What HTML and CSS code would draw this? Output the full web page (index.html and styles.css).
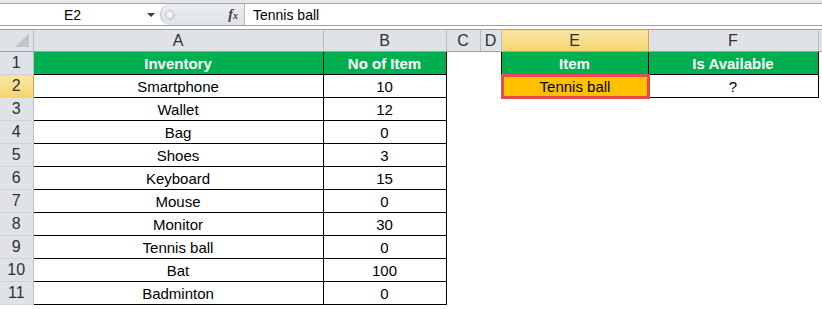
FILE: index.html
```html
<!DOCTYPE html>
<html lang="en">
<head>
    <meta charset="UTF-8">
    <title>Is Available - Excel</title>
    <link rel="stylesheet" href="styles.css">
</head>
<body>
    <div class="formula-bar">
        <div class="name-box">
            <span class="cell-ref">E2</span>
            <span class="drop"></span>
        </div>
        <div class="fx-zone">
            <span class="knob"></span>
            <span class="fx">f<small>x</small></span>
        </div>
        <div class="formula">Tennis ball</div>
    </div>

    <table class="sheet">
        <colgroup>
            <col class="w-row">
            <col class="w-a">
            <col class="w-b">
            <col class="w-c">
            <col class="w-d">
            <col class="w-e">
            <col class="w-f">
            <col class="w-g">
        </colgroup>
        <thead>
            <tr>
                <th class="corner"><span class="tri"></span></th>
                <th>A</th>
                <th>B</th>
                <th>C</th>
                <th>D</th>
                <th class="sel">E</th>
                <th>F</th>
                <th class="last"></th>
            </tr>
        </thead>
        <tbody>
            <tr>
                <th class="rh">1</th>
                <td class="hd">Inventory</td>
                <td class="hd">No of Item</td>
                <td></td>
                <td class="edge"></td>
                <td class="hd">Item</td>
                <td class="hd">Is Available</td>
                <td class="open"></td>
            </tr>
            <tr>
                <th class="rh sel">2</th>
                <td class="bx">Smartphone</td>
                <td class="bx">10</td>
                <td></td>
                <td class="edge"></td>
                <td class="bx active"><div class="pick">Tennis ball</div></td>
                <td class="bx">?</td>
                <td class="open"></td>
            </tr>
            <tr><th class="rh">3</th><td class="bx">Wallet</td><td class="bx">12</td><td></td><td></td><td></td><td></td><td class="open"></td></tr>
            <tr><th class="rh">4</th><td class="bx">Bag</td><td class="bx">0</td><td></td><td></td><td></td><td></td><td class="open"></td></tr>
            <tr><th class="rh">5</th><td class="bx">Shoes</td><td class="bx">3</td><td></td><td></td><td></td><td></td><td class="open"></td></tr>
            <tr><th class="rh">6</th><td class="bx">Keyboard</td><td class="bx">15</td><td></td><td></td><td></td><td></td><td class="open"></td></tr>
            <tr><th class="rh">7</th><td class="bx">Mouse</td><td class="bx">0</td><td></td><td></td><td></td><td></td><td class="open"></td></tr>
            <tr><th class="rh">8</th><td class="bx">Monitor</td><td class="bx">30</td><td></td><td></td><td></td><td></td><td class="open"></td></tr>
            <tr><th class="rh">9</th><td class="bx">Tennis ball</td><td class="bx">0</td><td></td><td></td><td></td><td></td><td class="open"></td></tr>
            <tr><th class="rh">10</th><td class="bx">Bat</td><td class="bx">100</td><td></td><td></td><td></td><td></td><td class="open"></td></tr>
            <tr><th class="rh">11</th><td class="bx">Badminton</td><td class="bx">0</td><td></td><td></td><td></td><td></td><td class="open"></td></tr>
        </tbody>
    </table>
</body>
</html>
```

FILE: styles.css
```css
body{
    margin: 0;
    background: #ffffff;
    font-family: "Liberation Sans", Arial, sans-serif;
    font-size: 15px;
    color: #000;
    overflow: hidden;
}
.formula-bar{
    display: flex;
    height: 21px;
    border-top: 1px solid #a3a7ad;
    border-bottom: 1px solid #9da1a7;
    box-shadow: 0 -3px 0 #e6e7ea;
    margin-top: 3px;
    margin-bottom: 3px;
}
.name-box{
    width: 160px;
    display: flex;
    align-items: center;
}
.cell-ref{
    width: 145px;
    text-align: center;
    font-size: 14px;
    padding-top: 1px;
}
.drop{
    width: 0;
    height: 0;
    border-left: 4px solid transparent;
    border-right: 4px solid transparent;
    border-top: 4px solid #3c3c3c;
    margin-left: 2px;
}
.fx-zone{
    width: 83px;
    background: linear-gradient(#eceef1, #dfe2e6);
    border-radius: 11px 0 0 11px;
    border-left: 1px solid #b4b8be;
    border-right: 1px solid #b4b8be;
    display: flex;
    align-items: center;
    justify-content: space-between;
}
.knob{
    width: 8px;
    height: 8px;
    border-radius: 50%;
    background: radial-gradient(circle at 45% 40%, #ffffff, #c9ccd1);
    border: 1px solid #c3c6cb;
    margin-left: 4px;
}
.fx{
    font-family: "Liberation Serif", "Times New Roman", serif;
    font-style: italic;
    font-weight: bold;
    font-size: 14px;
    color: #3a3a3a;
    margin-right: 6px;
}
.fx small{
    font-size: 10px;
}
.formula{
    flex: 1;
    padding-left: 8px;
    display: flex;
    align-items: center;
    padding-top: 1px;
    font-size: 14px;
}
.sheet{
    border-collapse: collapse;
    table-layout: fixed;
    width: 822px;
}
.w-row{ width: 33px; }
.w-a{ width: 290px; }
.w-b{ width: 123px; }
.w-c{ width: 34px; }
.w-d{ width: 21px; }
.w-e{ width: 147px; }
.w-f{ width: 170px; }
.w-g{ width: 4px; }
thead th{
    height: 21px;
    padding: 0;
    background: #dfe3e8;
    border-top: 1px solid #9da1a7;
    border-right: 1px solid #b8bcc2;
    border-bottom: 1px solid #9da1a7;
    font-weight: normal;
    font-size: 16px;
    color: #303030;
    text-align: center;
}
thead th.sel{
    background: linear-gradient(#fbe6a2, #f6d46f);
    border-right-color: #d2a24c;
    border-bottom-color: #d2a24c;
}
thead th.last{
    border-right: none;
}
.corner{
    position: relative;
}
.tri{
    position: absolute;
    right: 4px;
    bottom: 4px;
    width: 0;
    height: 0;
    border-left: 14px solid transparent;
    border-bottom: 14px solid #c2c6cc;
}
tbody tr{
    height: 23px;
}
td{
    padding: 0;
    text-align: center;
    white-space: nowrap;
}
.rh{
    background: #dfe3e8;
    border-right: 1px solid #b8bcc2;
    border-bottom: 1px solid #cfd3d8;
    font-weight: normal;
    font-size: 16px;
    color: #303030;
    text-align: center;
    padding: 0;
}
.rh.sel{
    background: linear-gradient(#fbe6a2, #f6d46f);
    border-right-color: #d2a24c;
}
.hd{
    background: #00b050;
    color: #ffffff;
    font-weight: bold;
    border: 1px solid #000;
}
.bx{
    border: 1px solid #000;
}
.active{
    background: #ffc000;
    padding: 0;
    position: relative;
}
.pick{
    position: absolute;
    inset: -1px -2px -2px -1px;
    border: 3px solid #e64c4c;
    display: flex;
    align-items: center;
    justify-content: center;
}
```
